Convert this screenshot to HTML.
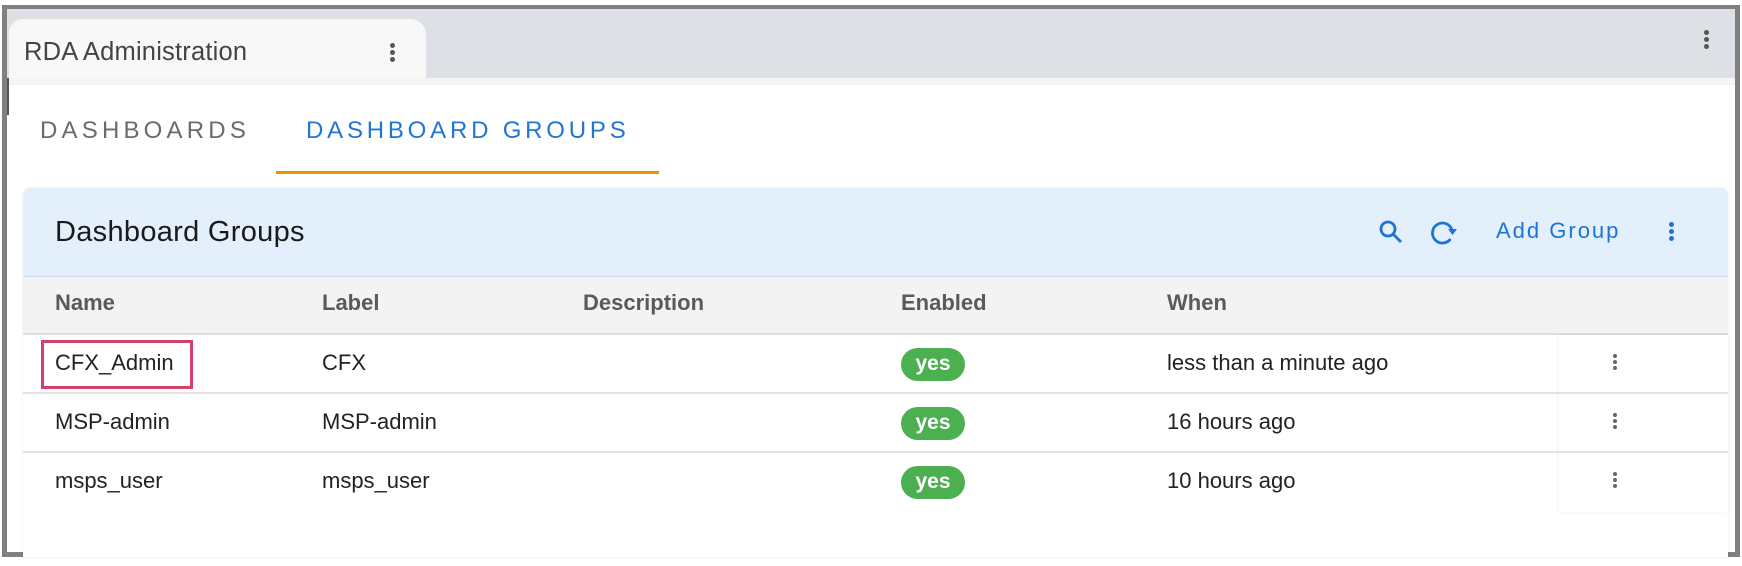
<!DOCTYPE html>
<html><head><meta charset="utf-8"><style>
*{margin:0;padding:0;box-sizing:border-box}
body{width:1742px;height:566px;background:#fff;font-family:"Liberation Sans",Arial,sans-serif;position:relative;overflow:hidden}
.abs{position:absolute}
.frame{left:2px;top:5px;width:1738px;height:552px;border:5px solid #808080;border-top-width:4px;background:#fff}
.dots{position:absolute;width:5px}
.dots i{display:block;width:5px;height:5px;border-radius:50%;background:#666;margin-bottom:2px}
.th{position:absolute;top:290px;font-size:22px;font-weight:bold;color:#5a5a5a}
.td{position:absolute;font-size:22px;color:#222}
.pill{position:absolute;left:901px;width:64px;height:33px;border-radius:17px;background:#4caf50;color:#fff;font-weight:bold;font-size:21px;text-align:center;line-height:32px}
.rl{position:absolute;left:23px;width:1705px;height:2px;background:#e2e2e2}
</style></head><body>
<div class="abs frame"></div>
<div class="abs" style="left:7px;top:9px;width:1728px;height:69px;background:#dde1e5"></div>
<div class="abs" style="left:7px;top:78px;width:1728px;height:7px;background:#f5f5f5"></div>
<div class="abs" style="left:7px;top:78px;width:2px;height:37px;background:#555"></div>
<div class="abs" style="left:9px;top:19px;width:417px;height:59px;background:#f8f8f8;border-radius:14px 16px 0 0"></div>
<div class="abs" style="left:24px;top:38px;font-size:25.5px;color:#444;letter-spacing:0.2px">RDA Administration</div>
<div class="dots" style="left:390px;top:43px"><i style="background:#555"></i><i style="background:#555"></i><i style="background:#555"></i></div>
<div class="dots" style="left:1704px;top:30px"><i style="background:#555"></i><i style="background:#555"></i><i style="background:#555"></i></div>
<div class="abs" style="left:40px;top:117px;font-size:24px;letter-spacing:4.2px;color:#6b6b6b">DASHBOARDS</div>
<div class="abs" style="left:306px;top:117px;font-size:24px;letter-spacing:3.8px;color:#2176d2">DASHBOARD GROUPS</div>
<div class="abs" style="left:276px;top:171px;width:383px;height:3px;background:#f39200"></div>
<div class="abs" style="left:23px;top:188px;width:1705px;height:369px;background:#fff;border-radius:8px 8px 0 0;box-shadow:0 0 2px rgba(0,0,0,.12)"></div>
<div class="abs" style="left:23px;top:188px;width:1705px;height:89px;background:#e3f0fb;border-radius:8px 8px 0 0;border-bottom:1px solid #cfdbe6"></div>
<div class="abs" style="left:55px;top:216px;font-size:29px;color:#1a1a1a;letter-spacing:0.3px">Dashboard Groups</div>
<svg class="abs" style="left:1376px;top:218px" width="30" height="30" viewBox="0 0 30 30"><circle cx="12" cy="11" r="7" fill="none" stroke="#1e73d6" stroke-width="2.8"/><line x1="17" y1="16" x2="25" y2="24" stroke="#1e73d6" stroke-width="2.8"/></svg>
<svg class="abs" style="left:1428px;top:218px" width="32" height="30" viewBox="0 0 32 30"><path d="M24 12 A10 10 0 1 0 22.5 21" fill="none" stroke="#1e73d6" stroke-width="2.8"/><path d="M20 11 L29 11 L24.5 17 Z" fill="#1e73d6"/></svg>
<div class="abs" style="left:1496px;top:218px;font-size:22px;letter-spacing:2px;color:#1e73d6">Add Group</div>
<div class="dots" style="left:1669px;top:222px"><i style="background:#1e73d6"></i><i style="background:#1e73d6"></i><i style="background:#1e73d6"></i></div>
<div class="abs" style="left:23px;top:277px;width:1705px;height:56px;background:#f3f3f3"></div>
<div class="abs" style="left:23px;top:333px;width:1705px;height:2px;background:#ddd"></div>
<div class="th" style="left:55px">Name</div>
<div class="th" style="left:322px">Label</div>
<div class="th" style="left:583px">Description</div>
<div class="th" style="left:901px">Enabled</div>
<div class="th" style="left:1167px">When</div>
<div class="abs" style="left:1559px;top:335px;width:169px;height:177px;box-shadow:-1px 0 3px rgba(0,0,0,.06)"></div>
<div class="rl" style="top:392px"></div>
<div class="rl" style="top:451px"></div>
<div class="abs" style="left:41px;top:340px;width:152px;height:49px;border:3px solid #d0426a"></div>
<div class="td" style="left:55px;top:350px">CFX_Admin</div>
<div class="td" style="left:322px;top:350px">CFX</div>
<div class="pill" style="top:348px">yes</div>
<div class="td" style="left:1167px;top:350px">less than a minute ago</div>
<div class="td" style="left:55px;top:409px">MSP-admin</div>
<div class="td" style="left:322px;top:409px">MSP-admin</div>
<div class="pill" style="top:407px">yes</div>
<div class="td" style="left:1167px;top:409px">16 hours ago</div>
<div class="td" style="left:55px;top:468px">msps_user</div>
<div class="td" style="left:322px;top:468px">msps_user</div>
<div class="pill" style="top:466px">yes</div>
<div class="td" style="left:1167px;top:468px">10 hours ago</div>
<div class="dots" style="left:1613px;top:354px"><i style="width:4px;height:4px"></i><i style="width:4px;height:4px"></i><i style="width:4px;height:4px"></i></div>
<div class="dots" style="left:1613px;top:413px"><i style="width:4px;height:4px"></i><i style="width:4px;height:4px"></i><i style="width:4px;height:4px"></i></div>
<div class="dots" style="left:1613px;top:472px"><i style="width:4px;height:4px"></i><i style="width:4px;height:4px"></i><i style="width:4px;height:4px"></i></div>
</body></html>
